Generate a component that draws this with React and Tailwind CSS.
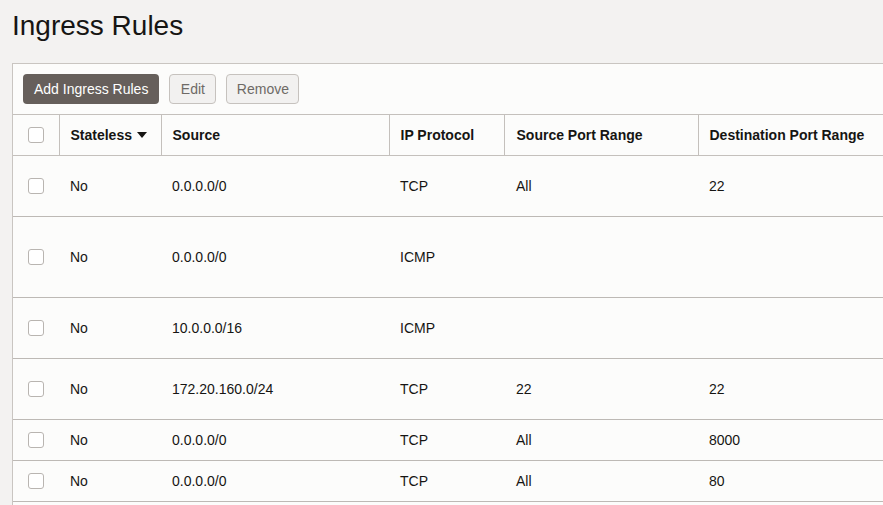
import React from "react";

const rules = [
  { source: "0.0.0.0/0", protocol: "TCP", srcPort: "All", destPort: "22", h: "h-[61px]" },
  { source: "0.0.0.0/0", protocol: "ICMP", srcPort: "", destPort: "", h: "h-[81px]" },
  { source: "10.0.0.0/16", protocol: "ICMP", srcPort: "", destPort: "", h: "h-[61px]" },
  { source: "172.20.160.0/24", protocol: "TCP", srcPort: "22", destPort: "22", h: "h-[61px]" },
  { source: "0.0.0.0/0", protocol: "TCP", srcPort: "All", destPort: "8000", h: "h-[41px]" },
  { source: "0.0.0.0/0", protocol: "TCP", srcPort: "All", destPort: "80", h: "h-[41px]" },
];

function Checkbox() {
  return <div className="w-[16px] h-[16px] rounded-[3px] border border-[#b9b5b1] bg-white mx-auto" />;
}

export default function App() {
  return (
    <div className="w-[883px] h-[505px] overflow-hidden bg-[#f3f2f1] text-[#161513] font-['Liberation_Sans',Arial,sans-serif]">
      <h1 className="text-[28px] leading-none pl-[12px] pt-[12px] h-[63px]">Ingress Rules</h1>
      <div className="ml-[12px] w-[900px] h-[460px] bg-[#fcfcfb] border-l border-t border-[#c9c5c1]">
        <div className="flex gap-[10px] pl-[10px] pt-[10px] pb-[10px]">
          <button className="h-[30px] px-[11px] rounded-[4px] bg-[#665f5b] text-white text-[14px]">Add Ingress Rules</button>
          <button className="h-[30px] w-[47px] rounded-[4px] border border-[#c6c2be] bg-[#f2f1f0] text-[#6e6a66] text-[14px]">Edit</button>
          <button className="h-[30px] w-[73px] rounded-[4px] border border-[#c6c2be] bg-[#f2f1f0] text-[#6e6a66] text-[14px]">Remove</button>
        </div>
        <table className="table-fixed border-collapse text-[14px] w-[900px]">
          <colgroup>
            <col className="w-[46px]" />
            <col className="w-[102px]" />
            <col className="w-[228px]" />
            <col className="w-[115px]" />
            <col className="w-[194px]" />
            <col />
          </colgroup>
          <thead>
            <tr className="h-[41px] border-t border-b border-[#c4c0bc]">
              <th className="border-r border-[#c4c0bc] align-middle"><Checkbox /></th>
              <th className="border-r border-[#c4c0bc] text-left font-bold pl-[11px]">
                <span className="inline-flex items-center gap-[5px]">
                  Stateless
                  <svg width="10" height="6" viewBox="0 0 10 6"><path d="M0 0h10L5 6z" fill="#161513" /></svg>
                </span>
              </th>
              <th className="border-r border-[#c4c0bc] text-left font-bold pl-[11px]">Source</th>
              <th className="border-r border-[#c4c0bc] text-left font-bold pl-[11px]">IP Protocol</th>
              <th className="border-r border-[#c4c0bc] text-left font-bold pl-[12px]">Source Port Range</th>
              <th className="text-left font-bold pl-[11px]">Destination Port Range</th>
            </tr>
          </thead>
          <tbody>
            {rules.map((r, i) => (
              <tr key={i} className={`${r.h} border-b border-[#bdb9b5]`}>
                <td className="align-middle"><Checkbox /></td>
                <td className="pl-[11px]">No</td>
                <td className="pl-[11px]">{r.source}</td>
                <td className="pl-[11px]">{r.protocol}</td>
                <td className="pl-[12px]">{r.srcPort}</td>
                <td className="pl-[11px]">{r.destPort}</td>
              </tr>
            ))}
          </tbody>
        </table>
      </div>
    </div>
  );
}
